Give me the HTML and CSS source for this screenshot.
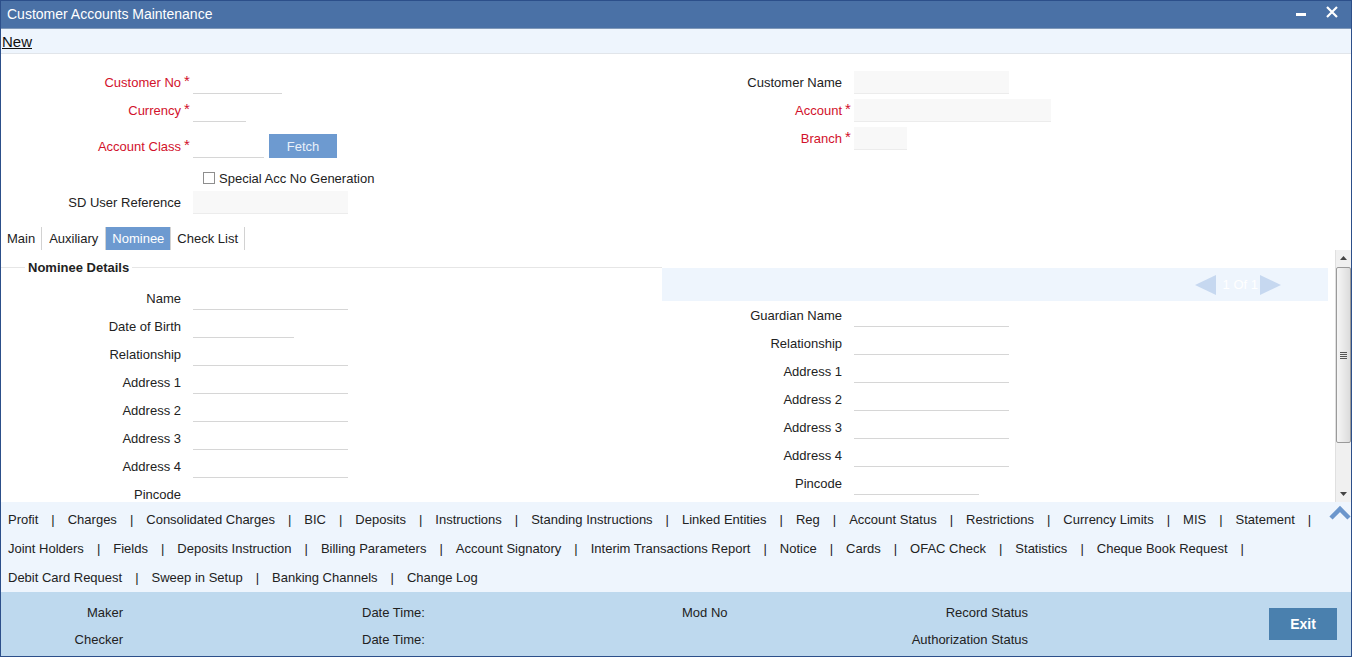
FILE: index.html
```html
<!DOCTYPE html>
<html>
<head>
<meta charset="utf-8">
<title>Customer Accounts Maintenance</title>
<link rel="stylesheet" href="styles.css">
</head>
<body>
<div class="window">
  <div class="titlebar">
    <span class="title">Customer Accounts Maintenance</span>
    <div class="controls">
      <span class="min"></span>
      <svg class="close" width="12" height="12" viewBox="0 0 12 12"><path d="M1 1 L11 11 M11 1 L1 11" stroke="#fff" stroke-width="2.2" fill="none"/></svg>
    </div>
  </div>
  <div class="toolbar"><span class="new">New</span></div>

  <div class="header">
    <div class="hcol">
      <div class="row"><span class="lbl req">Customer No</span><span class="ast">*</span><span class="inp w89"></span></div>
      <div class="row"><span class="lbl req">Currency</span><span class="ast">*</span><span class="inp w53"></span></div>
      <div class="row r3"><span class="lbl req">Account Class</span><span class="ast">*</span><span class="inp w71"></span><span class="btn-fetch">Fetch</span></div>
      <div class="chkrow"><span class="chk"></span><span class="chklbl">Special Acc No Generation</span></div>
      <div class="row"><span class="lbl">SD User Reference</span><span class="ast"></span><span class="inp ro w155"></span></div>
    </div>
    <div class="hcol">
      <div class="row"><span class="lbl">Customer Name</span><span class="ast"></span><span class="inp ro w155"></span></div>
      <div class="row"><span class="lbl req">Account</span><span class="ast">*</span><span class="inp ro w197"></span></div>
      <div class="row"><span class="lbl req">Branch</span><span class="ast">*</span><span class="inp ro w53"></span></div>
    </div>
  </div>

  <div class="tabs">
    <span class="tab">Main</span>
    <span class="tab aux">Auxiliary</span>
    <span class="tab active">Nominee</span>
    <span class="tab">Check List</span>
  </div>

  <div class="content">
    <div class="pane">
      <div class="ncol-left">
        <div class="legend"><span class="legend-text">Nominee Details</span></div>
        <div class="row"><span class="lbl">Name</span><span class="ast"></span><span class="inp w155"></span></div>
        <div class="row"><span class="lbl">Date of Birth</span><span class="ast"></span><span class="inp w101"></span></div>
        <div class="row"><span class="lbl">Relationship</span><span class="ast"></span><span class="inp w155"></span></div>
        <div class="row"><span class="lbl">Address 1</span><span class="ast"></span><span class="inp w155"></span></div>
        <div class="row"><span class="lbl">Address 2</span><span class="ast"></span><span class="inp w155"></span></div>
        <div class="row"><span class="lbl">Address 3</span><span class="ast"></span><span class="inp w155"></span></div>
        <div class="row"><span class="lbl">Address 4</span><span class="ast"></span><span class="inp w155"></span></div>
        <div class="row"><span class="lbl">Pincode</span><span class="ast"></span><span class="inp w155"></span></div>
      </div>
      <div class="ncol-right">
        <div class="pager">
          <svg width="21" height="20" viewBox="0 0 21 20"><polygon points="21,0 21,20 0,10" fill="#c6d8f0"/></svg>
          <span class="pager-text">1 Of 1</span>
          <svg width="21" height="20" viewBox="0 0 21 20"><polygon points="0,0 0,20 21,10" fill="#c6d8f0"/></svg>
        </div>
        <div class="row"><span class="lbl">Guardian Name</span><span class="ast"></span><span class="inp w155"></span></div>
        <div class="row"><span class="lbl">Relationship</span><span class="ast"></span><span class="inp w155"></span></div>
        <div class="row"><span class="lbl">Address 1</span><span class="ast"></span><span class="inp w155"></span></div>
        <div class="row"><span class="lbl">Address 2</span><span class="ast"></span><span class="inp w155"></span></div>
        <div class="row"><span class="lbl">Address 3</span><span class="ast"></span><span class="inp w155"></span></div>
        <div class="row"><span class="lbl">Address 4</span><span class="ast"></span><span class="inp w155"></span></div>
        <div class="row"><span class="lbl">Pincode</span><span class="ast"></span><span class="inp w125"></span></div>
      </div>
    </div>
    <div class="scrollbar">
      <div class="sb-btn"><svg width="7" height="4" viewBox="0 0 7 4"><polygon points="0,4 7,4 3.5,0" fill="#444"/></svg></div>
      <div class="sb-track">
        <div class="sb-thumb"><span class="grip"></span></div>
      </div>
      <div class="sb-btn"><svg width="7" height="4" viewBox="0 0 7 4"><polygon points="0,0 7,0 3.5,4" fill="#444"/></svg></div>
    </div>
  </div>

  <div class="links">
    <div class="linklines">
      <div class="lrow">
        <span>Profit</span><span class="sep">|</span><span>Charges</span><span class="sep">|</span><span>Consolidated Charges</span><span class="sep">|</span><span>BIC</span><span class="sep">|</span><span>Deposits</span><span class="sep">|</span><span>Instructions</span><span class="sep">|</span><span>Standing Instructions</span><span class="sep">|</span><span>Linked Entities</span><span class="sep">|</span><span>Reg</span><span class="sep">|</span><span>Account Status</span><span class="sep">|</span><span>Restrictions</span><span class="sep">|</span><span>Currency Limits</span><span class="sep">|</span><span>MIS</span><span class="sep">|</span><span>Statement</span><span class="sep">|</span>
      </div>
      <div class="lrow">
        <span>Joint Holders</span><span class="sep">|</span><span>Fields</span><span class="sep">|</span><span>Deposits Instruction</span><span class="sep">|</span><span>Billing Parameters</span><span class="sep">|</span><span>Account Signatory</span><span class="sep">|</span><span>Interim Transactions Report</span><span class="sep">|</span><span>Notice</span><span class="sep">|</span><span>Cards</span><span class="sep">|</span><span>OFAC Check</span><span class="sep">|</span><span>Statistics</span><span class="sep">|</span><span>Cheque Book Request</span><span class="sep">|</span>
      </div>
      <div class="lrow">
        <span>Debit Card Request</span><span class="sep">|</span><span>Sweep in Setup</span><span class="sep">|</span><span>Banking Channels</span><span class="sep">|</span><span>Change Log</span>
      </div>
    </div>
    <svg class="chevron" width="22" height="15" viewBox="0 0 22 15"><polyline points="2,13 11,4 20,13" fill="none" stroke="#6b96cc" stroke-width="4.5"/></svg>
  </div>

  <div class="footer">
    <span class="f-maker">Maker</span>
    <span class="f-blank"></span>
    <span class="f-date">Date Time:</span>
    <span class="f-mod">Mod No</span>
    <span class="f-status">Record Status</span>
    <span class="f-blank"></span>
    <span class="btn-exit">Exit</span>
    <span class="f-maker">Checker</span>
    <span class="f-blank"></span>
    <span class="f-date">Date Time:</span>
    <span class="f-mod"></span>
    <span class="f-status">Authorization Status</span>
    <span class="f-blank"></span>
  </div>
</div>
</body>
</html>
```

FILE: styles.css
```css
body {
  margin: 0;
  font-family: "Liberation Sans", Arial, sans-serif;
  font-size: 13px;
  color: #222;
}

.window {
  width: 1352px;
  height: 657px;
  box-sizing: border-box;
  border: 1px solid #2c4f8a;
  display: flex;
  flex-direction: column;
  background: #fff;
  overflow: hidden;
}

.titlebar {
  height: 27px;
  flex: none;
  border-bottom: 1px solid #7f98b8;
  background: #4a71a6;
  display: flex;
  align-items: center;
  justify-content: space-between;
  color: #fff;
}

.title {
  font-size: 14px;
  padding-left: 6px;
  margin-top: -2px;
}

.controls {
  display: flex;
  align-items: center;
  padding-right: 13px;
  margin-top: -6px;
}

.min {
  display: block;
  width: 10px;
  height: 3px;
  background: #fff;
  margin-right: 20px;
  margin-top: 6px;
}

.close {
  display: block;
}

.toolbar {
  height: 24px;
  flex: none;
  border-bottom: 1px solid #e1e5ea;
  background: #eef5fd;
  display: flex;
  align-items: center;
}

.new {
  font-size: 15px;
  text-decoration: underline;
  color: #111;
  padding-left: 1px;
}

.header {
  height: 173px;
  flex: none;
  box-sizing: border-box;
  padding-top: 14px;
  display: flex;
}

.hcol {
  width: 661px;
}

.row {
  display: flex;
  align-items: center;
  height: 28px;
}

.r3 {
  margin-top: 8px;
}

.lbl {
  width: 180px;
  flex: none;
  text-align: right;
}

.req {
  color: #d2112b;
}

.ast {
  width: 12px;
  flex: none;
  box-sizing: border-box;
  padding-left: 3px;
  color: #d2112b;
  font-size: 15px;
  margin-top: -3px;
}

.inp {
  display: block;
  height: 22px;
  border-bottom: 1px solid #d6d6d6;
  background: #fff;
  flex: none;
}

.inp.ro {
  background: #f8f8f8;
  border-bottom-color: #ececec;
}

.w53 { width: 53px; }
.w71 { width: 71px; }
.w89 { width: 89px; }
.w101 { width: 101px; }
.w125 { width: 125px; }
.w155 { width: 155px; }
.w197 { width: 197px; }

.btn-fetch {
  display: flex;
  align-items: center;
  justify-content: center;
  width: 68px;
  height: 24px;
  margin-left: 5px;
  background: #6d9ad0;
  color: #e9f0f9;
}

.chkrow {
  height: 20px;
  margin-top: 8px;
  padding-left: 202px;
  display: flex;
  align-items: center;
}

.chk {
  display: block;
  width: 10px;
  height: 10px;
  border: 1px solid #8e8e8e;
  background: #fff;
}

.chklbl {
  margin-left: 4px;
}

.tabs {
  height: 23px;
  flex: none;
  display: flex;
}

.tab {
  padding: 0 6px;
  line-height: 23px;
  border-right: 1px solid #d2d2d2;
}

.tab.aux {
  padding: 0 7px;
}

.tab.active {
  background: #6d9ad0;
  color: #fff;
}

.content {
  height: 252px;
  flex: none;
  display: flex;
}

.pane {
  flex: 1;
  display: flex;
  overflow: hidden;
}

.ncol-left {
  width: 661px;
  flex: none;
}

.ncol-right {
  flex: 1;
}

.legend {
  height: 34px;
  display: flex;
  align-items: center;
}

.legend::before {
  content: "";
  width: 24px;
  border-top: 1px solid #e6e6e6;
}

.legend::after {
  content: "";
  flex: 1;
  border-top: 1px solid #e6e6e6;
}

.legend-text {
  font-weight: bold;
  padding: 0 3px;
}

.pager {
  margin-top: 18px;
  margin-right: 7px;
  height: 33px;
  background: #eef5fd;
  display: flex;
  align-items: center;
  justify-content: flex-end;
  padding-right: 47px;
}

.pager svg {
  display: block;
}

.pager-text {
  color: #fff;
  margin: 0 2px 0 7px;
}

.scrollbar {
  width: 16px;
  flex: none;
  display: flex;
  flex-direction: column;
  background: #f0f0f0;
  border-left: 1px solid #e0e0e0;
  box-sizing: border-box;
}

.sb-btn {
  height: 16px;
  flex: none;
  display: flex;
  align-items: center;
  justify-content: center;
}

.sb-track {
  flex: 1;
  padding-top: 1px;
}

.sb-thumb {
  height: 176px;
  box-sizing: border-box;
  border: 1px solid #9a9a9a;
  border-radius: 2px;
  background: linear-gradient(to right, #f6f6f6, #dcdcdc);
  display: flex;
  align-items: center;
  justify-content: center;
}

.grip {
  display: block;
  width: 7px;
  height: 7px;
  background: repeating-linear-gradient(to bottom, #555 0, #555 1px, transparent 1px, transparent 2px);
}

.links {
  height: 90px;
  flex: none;
  box-sizing: border-box;
  padding-top: 3px;
  background: #eef5fd;
  display: flex;
}

.linklines {
  flex: 1;
  padding-left: 7px;
}

.lrow {
  height: 29px;
  display: flex;
  align-items: center;
  white-space: nowrap;
}

.sep {
  padding: 0 13px;
}

.chevron {
  display: block;
  flex: none;
}

.footer {
  flex: 1;
  background: #bed9ee;
  display: grid;
  grid-template-columns: 122px 239px 320px 196px 150px 241px 68px;
  grid-template-rows: 27px 27px;
  padding-top: 7px;
  box-sizing: border-box;
  align-items: center;
}

.f-maker {
  text-align: right;
}

.f-status {
  text-align: right;
}

.btn-exit {
  grid-column: 7;
  grid-row: 1 / 3;
  align-self: start;
  margin-top: 9px;
  height: 32px;
  background: #4a80ae;
  color: #fff;
  font-weight: bold;
  font-size: 14px;
  display: flex;
  align-items: center;
  justify-content: center;
}
```
